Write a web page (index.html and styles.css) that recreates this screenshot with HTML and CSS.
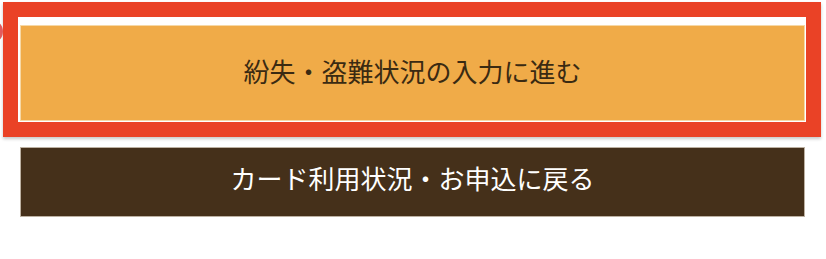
FILE: index.html
```html
<!DOCTYPE html>
<html lang="ja">
<head>
<meta charset="utf-8">
<link rel="stylesheet" href="styles.css">
</head>
<body>
<div class="page">
  <span class="badge"></span>
  <div class="highlight">
    <div class="inner">
      <a class="btn btn-primary">紛失・盗難状況の入力に進む</a>
    </div>
  </div>
  <a class="btn btn-back">カード利用状況・お申込に戻る</a>
</div>
</body>
</html>
```
FILE: styles.css
```css
html, body {
  margin: 0;
  padding: 0;
  background: #ffffff;
}
.page {
  position: relative;
  width: 826px;
  height: 259px;
  padding: 2px 0 0 3px;
  box-sizing: border-box;
  font-family: "Noto Sans CJK JP", "Noto Sans", sans-serif;
  overflow: hidden;
}
.badge {
  position: absolute;
  left: -22px;
  top: 19px;
  width: 25px;
  height: 25px;
  border-radius: 50%;
  background: #e35a5c;
  filter: blur(0.6px);
}
.highlight {
  width: 818px;
  height: 135px;
  box-sizing: border-box;
  border: 15px solid #ea4226;
  box-shadow: 0 2px 3px rgba(0, 0, 0, 0.22);
  background: #ffffff;
}
.inner {
  padding: 8px 1px 0 2px;
  height: 100%;
  box-sizing: border-box;
}
.btn {
  display: flex;
  align-items: center;
  justify-content: center;
  box-sizing: border-box;
  font-size: 26px;
  text-decoration: none;
  letter-spacing: 0;
  white-space: nowrap;
}
.btn-primary {
  height: 96px;
  background: #f0ab48;
  border: 1px solid #f6d8a6;
  color: #3a2a12;
  padding-bottom: 6px;
}
.btn-back {
  margin: 10px 0 0 17px;
  width: 785px;
  height: 70px;
  background: #45301a;
  border: 1px solid #bdb1a2;
  color: #ffffff;
  padding-bottom: 10px;
}
```
